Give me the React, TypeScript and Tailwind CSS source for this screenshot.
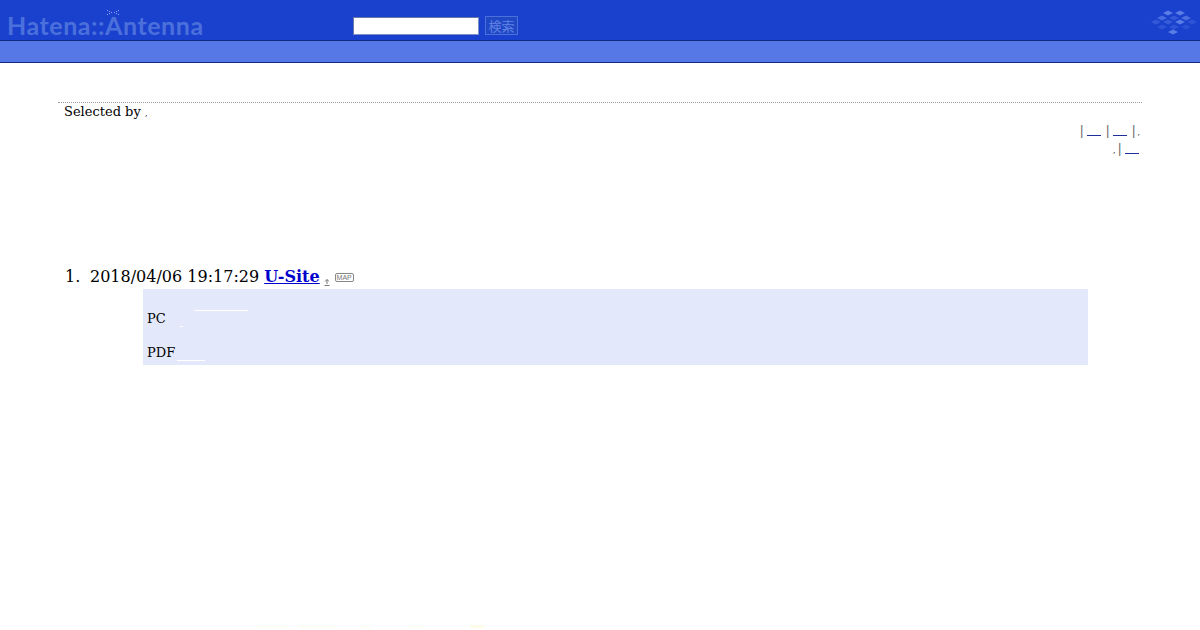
const SERIF = "font-['DejaVu_Serif',serif]";

function Diamonds() {
  // Hatena mark: faded grid of small diamonds
  const cells: [number, number, number][] = [
    [28, 13, 0.75], [40, 13, 0.75],
    [22, 18, 0.55], [34, 18, 0.3], [46, 18, 0.6],
    [16, 22, 0.3], [28, 22, 0.35], [40, 22, 0.75], [52, 22, 0.25],
    [22, 27, 0.25], [34, 27, 0.25], [46, 27, 0.2],
    [33, 32, 0.75],
  ];
  return (
    <svg width="60" height="40" viewBox="0 0 60 40" className="block">
      {cells.map(([x, y, o]) => (
        <path
          key={`${x}-${y}`}
          d={`M${x - 5} ${y}L${x} ${y - 2.5}L${x + 5} ${y}L${x} ${y + 2.5}Z`}
          fill="#6f90ee"
          opacity={o}
        />
      ))}
    </svg>
  );
}

function Pipe() {
  return <span className="w-[5px] text-[#555] opacity-90">|</span>;
}

function Blank() {
  return <span className="ml-[3px] mr-[4px] mt-[13px] h-px w-[14px] self-start bg-[#1c2f9a]" />;
}

function Dot() {
  return <span className="text-[8px]">,</span>;
}

export default function App() {
  return (
    <div className={`flex h-[630px] w-[1200px] flex-col overflow-hidden bg-white ${SERIF} text-black`}>
      <header className="flex h-[41px] items-start border-b border-[#10287f] bg-[#1a41cd]">
        <div className="relative ml-[7px] mt-[13px] w-[346px] font-['Lato',sans-serif] text-[25px] font-bold leading-none tracking-[0.55px] text-[#4b70dc]">
          Hatena::Antenna
          <svg width="12" height="5" viewBox="0 0 12 5" className="absolute left-[100px] top-[-3px]">
            <path d="M0 0.5H1M2 1.5H3M4 2.5H5M2 3.5H3M0 4.5H1M11 0.5H12M9 1.5H10M7 2.5H8M9 3.5H10M11 4.5H12" stroke="#8ea6ee" />
          </svg>
        </div>
        <input
          type="text"
          aria-label="検索"
          className="mt-[17px] h-[18px] w-[126px] border border-[#7f8fc4] border-t-[#6c78a8] border-l-[#6c78a8] bg-white"
        />
        <button className="ml-[6px] mt-[16px] h-[19px] w-[33px] border border-[#4b70dc] bg-[#2148c4] font-['Noto_Sans_CJK_JP',sans-serif] text-[13px] leading-none text-[#5f82e4]">
          検索
        </button>
        <div className="ml-auto">
          <Diamonds />
        </div>
      </header>
      <div className="h-[22px] border-b border-[#10287f] bg-[#5578e6]" />

      <main className="px-[58px] pt-[39px]">
        <div className="h-[19px] border-t border-dotted border-[#999] px-[6px] text-[13px] leading-[18px]">
          Selected by <Dot />
        </div>
        <div className="mt-[1px] pr-[2px] text-[13px] leading-[18px]">
          <div className="flex h-[18px] items-baseline justify-end">
            <Pipe />
            <Blank />
            <Pipe />
            <Blank />
            <Pipe />
            <span className="ml-[1px]">
              <Dot />
            </span>
          </div>
          <div className="flex h-[18px] items-baseline justify-end pr-[1px]">
            <Dot />
            <span className="ml-[2px]">
              <Pipe />
            </span>
            <span className="-mr-[4px] flex self-stretch">
              <Blank />
            </span>
          </div>
        </div>

        <div className="mt-[107px] flex items-baseline pl-[7px] text-[16px] leading-[24px]">
          <span className="w-[25px]">1.</span>
          <span>2018/04/06 19:17:29</span>
          <a className="ml-[5px] text-[16px] font-bold text-[#0000cc] underline">U-Site</a>
          <svg width="6" height="7" viewBox="0 0 6 7" className="mb-[3px] ml-[4px] self-end">
            <path d="M3 0.5V5M1 2.5L3 0.5L5 2.5M0.5 6.5H5.5" fill="none" stroke="#777" strokeWidth="1" />
          </svg>
          <span className="ml-[5px] inline-flex h-[9px] w-[19px] items-center justify-center self-center rounded-[2px] border border-[#888] font-['Liberation_Sans',sans-serif] text-[7px] font-normal leading-none text-[#777]">
            MAP
          </span>
        </div>

        <div className="ml-[85px] h-[76px] w-[945px] bg-[#e3e9fb] px-[4px] text-[13px] leading-[18px]">
          <div className="relative pt-[21px]">
            PC
            <span className="absolute left-[47px] top-[21px] h-px w-[54px] bg-white" />
            <span className="absolute left-[33px] top-[37px] h-px w-[3px] bg-white" />
          </div>
          <div className="relative mt-[16px]">
            PDF
            <span className="absolute left-[30px] top-[16px] h-px w-[28px] bg-white" />
          </div>
        </div>
      </main>

      <footer className="mb-[2px] ml-[256px] mt-auto flex gap-[10px]">
        <span className="h-[3px] w-[32px] bg-[#fffef6]" />
        <span className="h-[3px] w-[38px] bg-[#fffef6]" />
        <span className="ml-[14px] h-[3px] w-[10px] bg-[#fffef6]" />
        <span className="ml-[28px] h-[3px] w-[16px] bg-[#fffef6]" />
        <span className="ml-[36px] h-[3px] w-[14px] bg-[#fffdea]" />
      </footer>
    </div>
  );
}
